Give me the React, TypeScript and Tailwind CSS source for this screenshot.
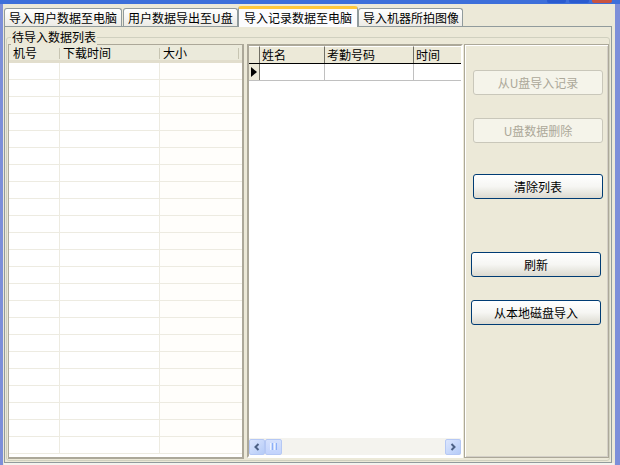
import React from 'react';

const font = "font-['Noto_Sans_CJK_SC','Noto_Sans',sans-serif]";

const tabs = [
  { label: '导入用户数据至电脑', w: 'w-[118px]' },
  { label: '用户数据导出至U盘', w: 'w-[115px]' },
  { label: '导入记录数据至电脑', w: 'w-[120px]', active: true },
  { label: '导入机器所拍图像', w: 'w-[105px]' },
];

const XpButton: React.FC<{ label: string; disabled?: boolean; className?: string }> = ({ label, disabled, className }) =>
  disabled ? (
    <div className={`h-[25px] w-[130px] rounded-[3px] border border-[#C9C7BA] bg-[#F5F4EA] text-[12px] leading-[23px] text-center text-[#ACA899] ${className ?? ''}`}>
      {label}
    </div>
  ) : (
    <div className={`h-[25px] w-[130px] rounded-[3px] border border-[#003C74] bg-linear-to-b from-white via-[#F6F6F3] to-[#DCDAD0] text-[12px] leading-[23px] text-center text-black ${className ?? ''}`}>
      {label}
    </div>
  );

const ScrollArrow: React.FC<{ dir: 'l' | 'r' }> = ({ dir }) => (
  <div className="w-[16px] h-[16px] rounded-[2px] border border-[#B5C8F4] bg-linear-to-br from-[#DCE6FE] to-[#B5CBF7] flex items-center justify-center">
    <svg width="8" height="8" viewBox="0 0 8 8">
      {dir === 'l' ? (
        <path d="M5.5 1 L2.5 4 L5.5 7" stroke="#4D6185" strokeWidth="2" fill="none" />
      ) : (
        <path d="M2.5 1 L5.5 4 L2.5 7" stroke="#4D6185" strokeWidth="2" fill="none" />
      )}
    </svg>
  </div>
);

export default function App() {
  const rows = Array.from({ length: 23 });

  return (
    <div className={`w-[620px] h-[465px] bg-[#ECE9D8] flex flex-col overflow-hidden ${font} text-[12px] text-black`}>
      {/* title bar remnant */}
      <div className="h-[4px] bg-[#3D6FDA] flex justify-end pr-[8px] gap-[3px] shrink-0">
        <div className="w-[19px] h-[3px] bg-[#2A5BD0] rounded-b-[2px]" />
        <div className="w-[20px] h-[3px] bg-[#2A5BD0] rounded-b-[2px]" />
        <div className="w-[20px] h-[3px] bg-[#C9533F] rounded-b-[2px]" />
      </div>

      <div className="flex flex-1 min-h-0">
        <div className="w-[3px] bg-[#7D8FD9] shrink-0" />
        <div className="flex-1 flex flex-col min-w-0 pl-[1px]">
          {/* tabs */}
          <div className="h-[22px] flex items-end shrink-0 gap-[1px]">
            {tabs.map((t) =>
              t.active ? (
                <div
                  key={t.label}
                  className={`${t.w} h-[21px] -mx-[1px] -mb-[1px] relative z-10 rounded-t-[3px] border-x border-[#919B9C] border-t-[3px] border-t-[#FFC83C] bg-[#FCFCFE] pl-[5px] leading-[17px] whitespace-nowrap`}
                >
                  {t.label}
                </div>
              ) : (
                <div
                  key={t.label}
                  className={`${t.w} h-[18px] rounded-t-[3px] border border-b-0 border-[#919B9C] bg-linear-to-b from-white to-[#ECEBE6] pl-[4px] leading-[17px] whitespace-nowrap overflow-hidden`}
                >
                  {t.label}
                </div>
              )
            )}
          </div>

          {/* tab panel */}
          <div className="flex-1 min-h-0 mr-[2px] border border-[#919B9C] bg-[#ECE9D8] flex flex-col pt-[4px] px-[1px]">
            {/* group box */}
            <div className="relative flex-1 min-h-0 mt-[6px] mb-[1px] border border-[#D0D0BF] rounded-[3px] flex pt-[6px] pl-[1px] pr-[1px]">
              <div className="absolute -top-[9px] left-[4px] bg-[#ECE9D8] px-[1px] leading-[16px]">待导入数据列表</div>

              {/* left list */}
              <div className="w-[236px] h-[415px] border border-[#ACA899] border-r-2 border-b-2 bg-white flex flex-col shrink-0 overflow-hidden">
                <div className="h-[18px] flex bg-[#EBEADB] border-b-[3px] border-[#E2DECD] shrink-0">
                  <div className="w-[51px] pl-[4px] leading-[16px] relative">
                    机号
                    <div className="absolute right-0 top-[3px] h-[11px] w-[1px] bg-[#C7C5B2]" />
                  </div>
                  <div className="w-[100px] pl-[3px] leading-[16px] relative">
                    下载时间
                    <div className="absolute right-0 top-[3px] h-[11px] w-[1px] bg-[#C7C5B2]" />
                  </div>
                  <div className="flex-1 pl-[3px] leading-[16px] relative">
                    大小
                    <div className="absolute right-[3px] top-[3px] h-[11px] w-[1px] bg-[#C7C5B2]" />
                  </div>
                </div>
                {rows.map((_, i) => (
                  <div key={i} className="h-[17px] flex border-b border-[#EDEBE1] shrink-0">
                    <div className="w-[51px] border-r border-[#EDEBE1]" />
                    <div className="w-[100px] border-r border-[#EDEBE1]" />
                    <div className="flex-1 bg-[#FFFEFB]" />
                  </div>
                ))}
              </div>

              {/* right grid */}
              <div className="ml-[3px] w-[216px] h-[414px] border-2 border-t-[#ACA899] border-l-[#ACA899] border-r-white border-b-white bg-white flex flex-col shrink-0">
                <div className="flex h-[18px] border-b border-black shrink-0">
                  <div className="w-[11px] bg-[#ECE9D8] border-r border-[#716F64] border-t border-t-white" />
                  <div className="w-[65px] bg-[#ECE9D8] border-r border-[#716F64] border-t border-t-white pl-[2px] leading-[16px]">姓名</div>
                  <div className="w-[89px] bg-[#ECE9D8] border-r border-[#716F64] border-t border-t-white pl-[2px] leading-[16px]">考勤号码</div>
                  <div className="flex-1 bg-[#ECE9D8] border-t border-t-white pl-[2px] leading-[16px]">时间</div>
                </div>
                <div className="flex h-[17px] shrink-0 border-b border-[#C0C0C0]">
                  <div className="w-[11px] bg-[#ECE9D8] border-r border-[#716F64] flex items-center justify-center">
                    <svg width="6" height="10" viewBox="0 0 6 10">
                      <path d="M0 0 L6 5 L0 10 Z" fill="black" />
                    </svg>
                  </div>
                  <div className="w-[65px] border-r border-[#C0C0C0]" />
                  <div className="w-[89px] border-r border-[#C0C0C0]" />
                  <div className="flex-1" />
                </div>
                <div className="flex-1" />
                <div className="h-[17px] flex items-center bg-[#F4F3EE] shrink-0 mb-[1px]">
                  <ScrollArrow dir="l" />
                  <div className="w-[17px] h-[16px] rounded-[2px] border border-[#B5C8F4] bg-linear-to-b from-[#D5E1FD] to-[#C2D3FC] flex items-center justify-center gap-[1px]">
                    <div className="w-[1px] h-[7px] bg-[#EEF4FE]" />
                    <div className="w-[1px] h-[7px] bg-[#8CB0F8]" />
                    <div className="w-[1px] h-[7px] bg-[#EEF4FE]" />
                    <div className="w-[1px] h-[7px] bg-[#8CB0F8]" />
                  </div>
                  <div className="flex-1" />
                  <ScrollArrow dir="r" />
                </div>
              </div>

              {/* right panel */}
              <div className="ml-[1px] w-[145px] h-[414px] border border-[#ACA899] shadow-[inset_1px_1px_0_white,inset_-1px_-1px_0_#D4D0C8] bg-[#ECE9D8] flex flex-col shrink-0 pt-[25px]">
                <XpButton label="从U盘导入记录" disabled className="ml-[8px]" />
                <XpButton label="U盘数据删除" disabled className="ml-[8px] mt-[23px]" />
                <XpButton label="清除列表" className="ml-[8px] mt-[31px]" />
                <XpButton label="刷新" className="ml-[6px] mt-[53px]" />
                <XpButton label="从本地磁盘导入" className="ml-[6px] mt-[23px]" />
              </div>
            </div>
          </div>
          <div className="h-[2px] bg-[#F4F3EE] shrink-0" />
        </div>
        <div className="w-[6px] bg-[#7D8FD9] shrink-0 border-l border-[#ECE9D8]" />
      </div>
    </div>
  );
}
